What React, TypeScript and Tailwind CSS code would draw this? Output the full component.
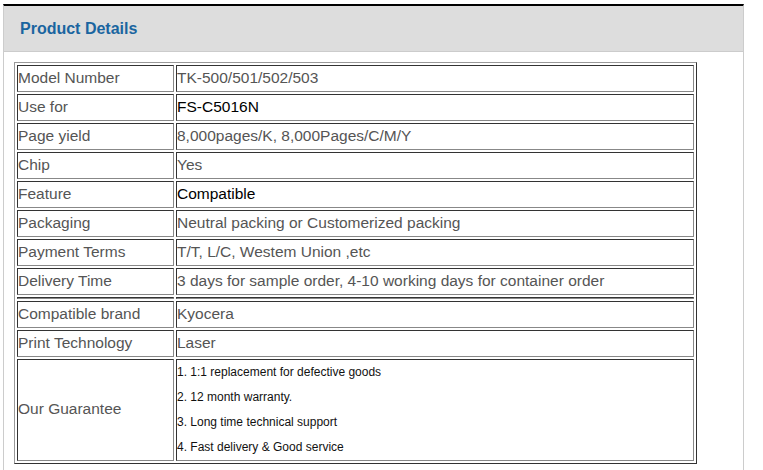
const rows: { label: string; value: string; dark?: boolean }[] = [
  { label: "Model Number", value: "TK-500/501/502/503" },
  { label: "Use for", value: "FS-C5016N", dark: true },
  { label: "Page yield", value: "8,000pages/K, 8,000Pages/C/M/Y" },
  { label: "Chip", value: "Yes" },
  { label: "Feature", value: "Compatible", dark: true },
  { label: "Packaging", value: "Neutral packing or Customerized packing" },
  { label: "Payment Terms", value: "T/T, L/C, Westem Union ,etc" },
  { label: "Delivery Time", value: "3 days for sample order, 4-10 working days for container order" },
];

const moreRows = [
  { label: "Compatible brand", value: "Kyocera" },
  { label: "Print Technology", value: "Laser" },
];

const guarantee = [
  "1. 1:1 replacement for defective goods",
  "2. 12 month warranty.",
  "3. Long time technical support",
  "4. Fast delivery & Good service",
];

const cell =
  "border border-t-[#333] border-l-[#333] border-r-[#888] border-b-[#888] p-0 align-middle";

export default function App() {
  return (
    <div className="min-h-[470px] bg-white pt-[4px] pl-[3px] font-['Liberation_Sans',Arial,sans-serif]">
      <div className="w-[741px] min-h-[466px] border-t-2 border-t-black border-x border-x-[#ccc]">
        <div className="h-[46px] bg-[#ddd] border-b border-b-[#ccc] flex items-center pl-[16px]">
          <h2 className="text-[16px] font-bold text-[#1a65a0]">Product Details</h2>
        </div>
        <div className="pt-[10px] pl-[10px]">
          <table className="w-[683px] border-separate border-spacing-[2px] border border-t-[#999] border-l-[#999] border-r-[#333] border-b-[#333] text-[15.5px] text-[#555]">
            <tbody>
              {rows.map((r) => (
                <tr key={r.label}>
                  <td className={`${cell} w-[157px] h-[27px] pb-px`}>{r.label}</td>
                  <td className={`${cell} h-[27px] pb-px ${r.dark ? "text-black" : ""}`}>{r.value}</td>
                </tr>
              ))}
              <tr>
                <td className={`${cell} h-[2px]`}></td>
                <td className={`${cell} h-[2px]`}></td>
              </tr>
              {moreRows.map((r) => (
                <tr key={r.label}>
                  <td className={`${cell} h-[27px] pb-px`}>{r.label}</td>
                  <td className={`${cell} h-[27px] pb-px`}>{r.value}</td>
                </tr>
              ))}
              <tr>
                <td className={`${cell} h-[102px] pb-[2px]`}>Our Guarantee</td>
                <td className={`${cell} h-[102px]`}>
                  {guarantee.map((g) => (
                    <div key={g} className="h-[25px] leading-[25px] text-[12px] text-[#111]">
                      {g}
                    </div>
                  ))}
                </td>
              </tr>
            </tbody>
          </table>
        </div>
      </div>
    </div>
  );
}
